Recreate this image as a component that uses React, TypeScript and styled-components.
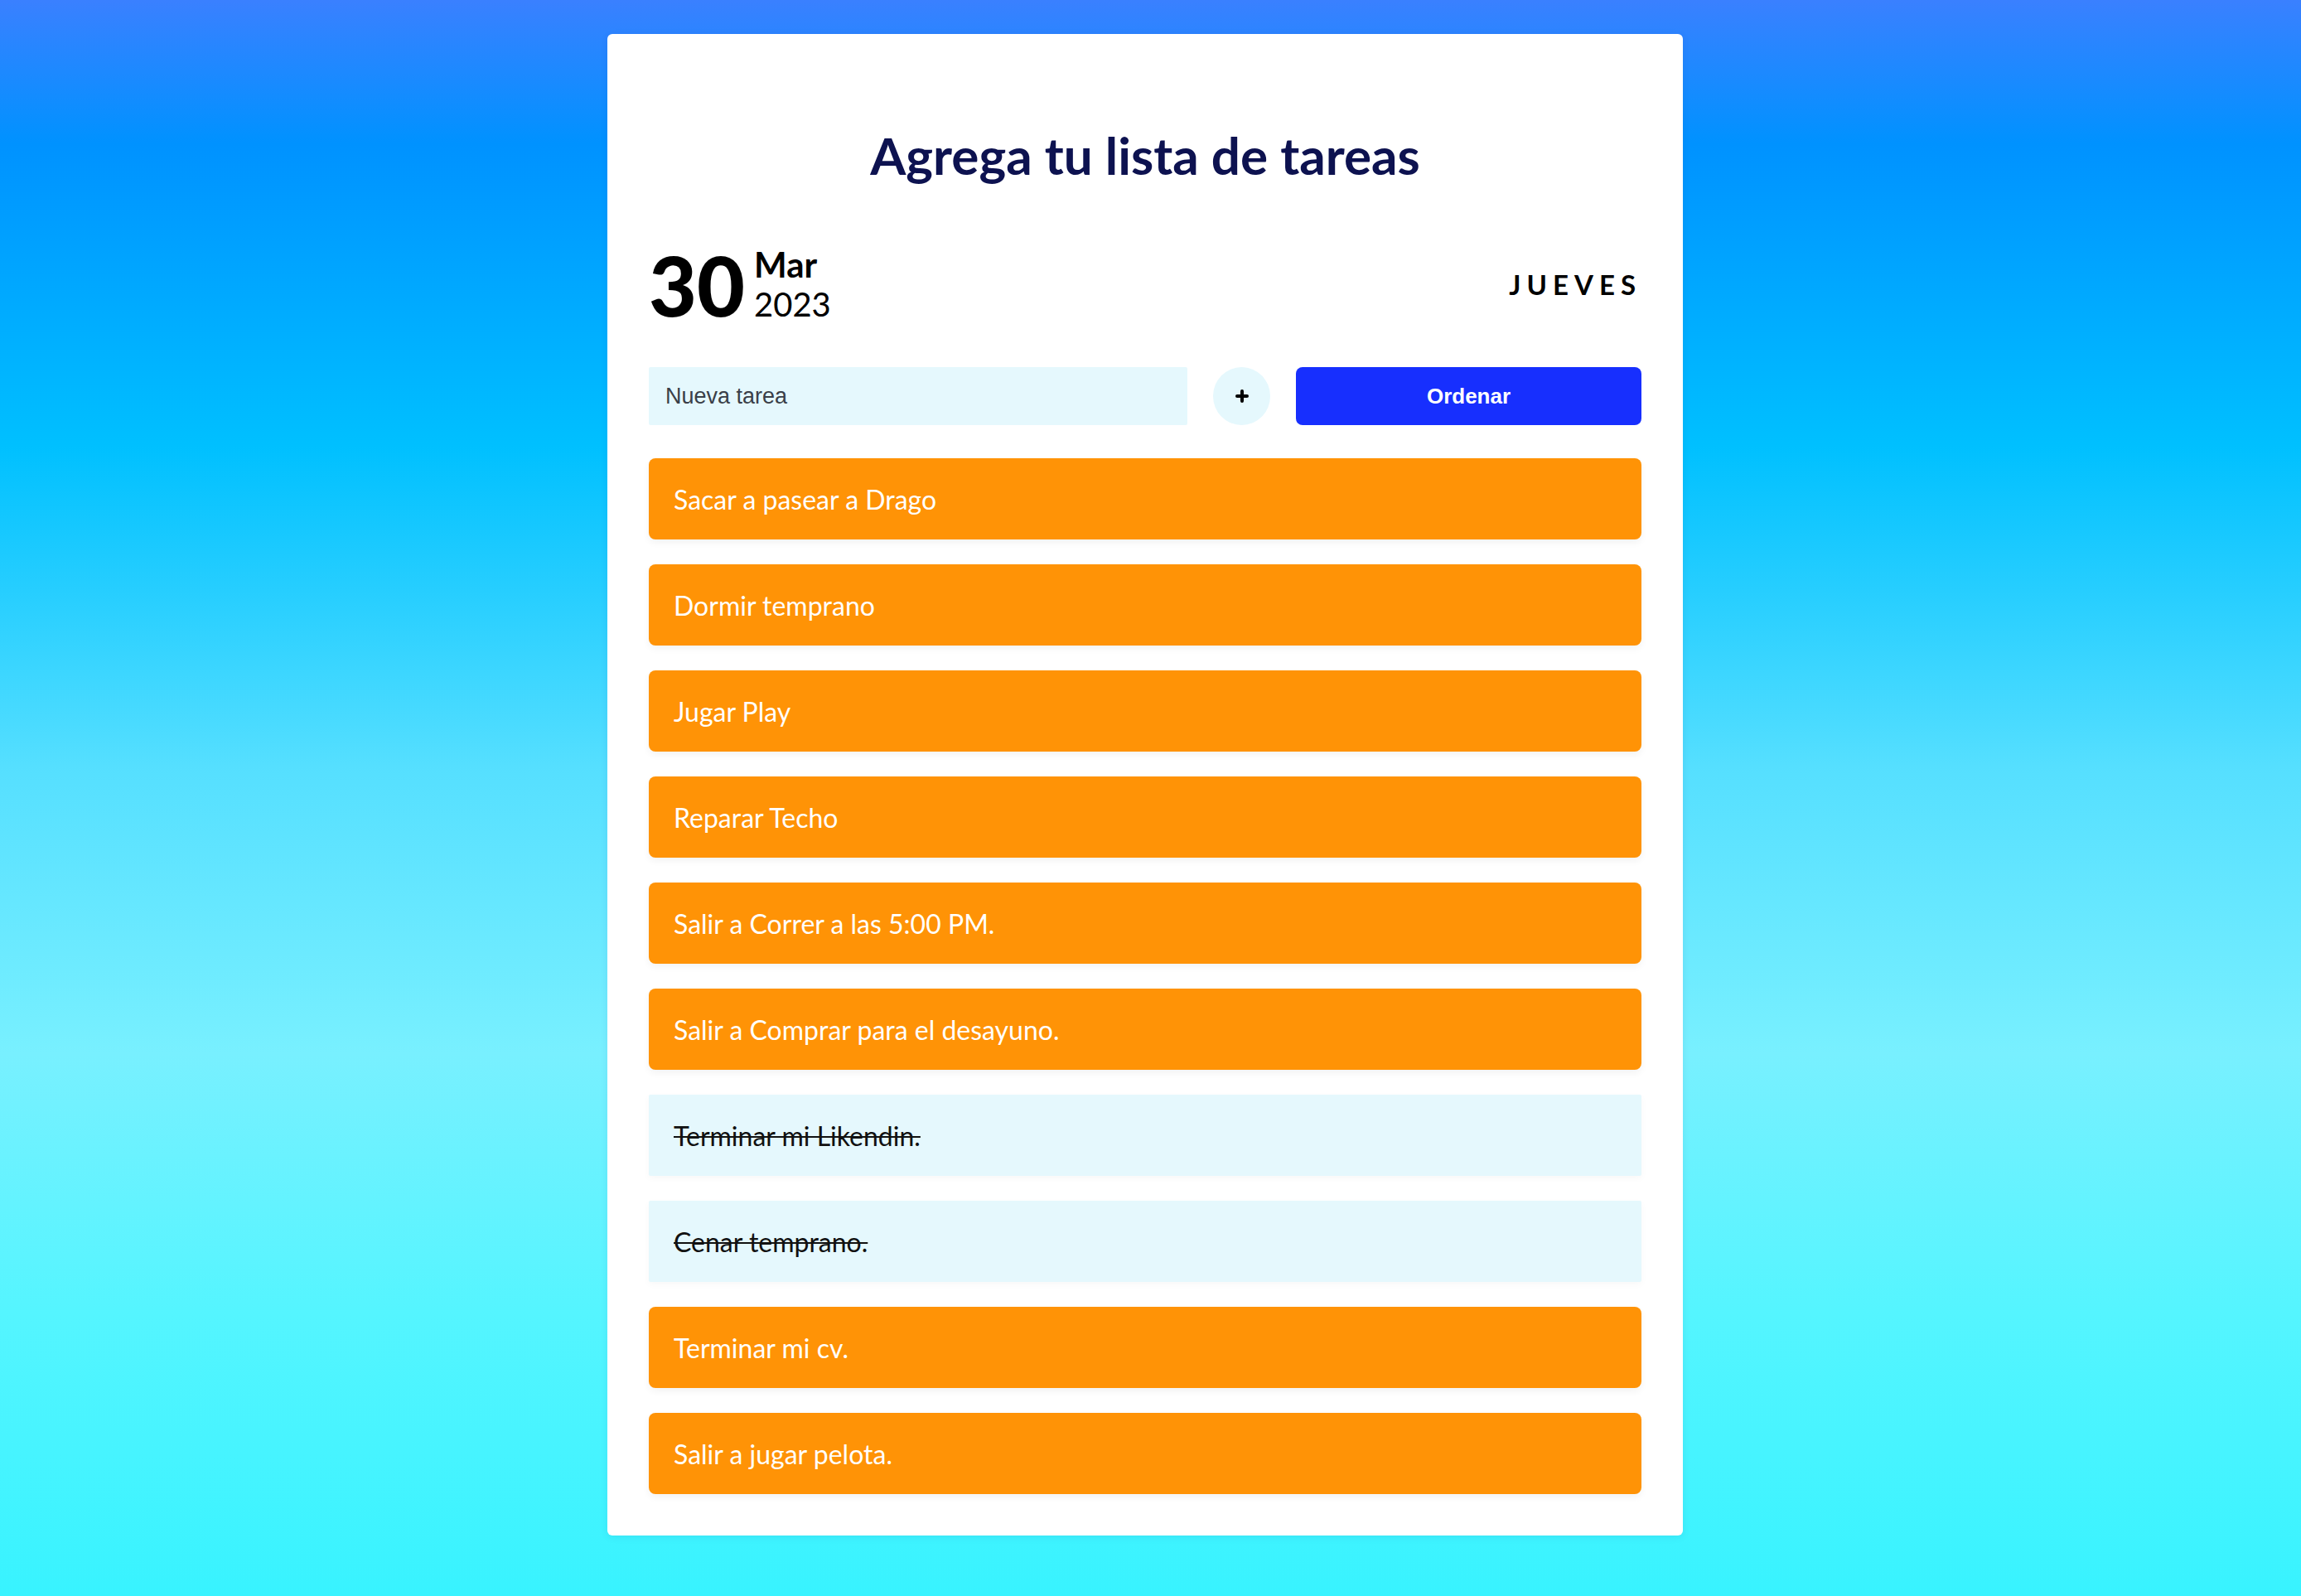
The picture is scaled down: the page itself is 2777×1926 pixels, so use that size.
import React from "react";
import styled, { createGlobalStyle } from "styled-components";

const GlobalStyle = createGlobalStyle`
  html, body {
    margin: 0;
    padding: 0;
  }
  body {
    min-height: 1926px;
    font-family: Lato, "Open Sans", sans-serif;
    background: linear-gradient(
      180deg,
      #3a80ff 0%,
      #0092ff 9%,
      #00c0ff 28%,
      #55dfff 48%,
      #78f0ff 66%,
      #55f5ff 82%,
      #38f3ff 100%
    );
  }
  * { box-sizing: border-box; }
`;

const Page = styled.div`
  display: flex;
  justify-content: center;
  padding: 41px 13px 72px 0;
`;

const Card = styled.main`
  width: 1298px;
  background: #ffffff;
  border-radius: 6px;
  padding: 50px;
  box-shadow: 0 2px 10px rgba(0, 40, 120, 0.08);
`;

const Title = styled.h1`
  margin: 59px 0 0;
  text-align: center;
  font-family: Lato, sans-serif;
  font-weight: 700;
  font-size: 62px;
  line-height: 1.2;
  color: #0d1250;
`;

const DateRow = styled.div`
  margin-top: 69px;
  display: flex;
  align-items: center;
  justify-content: space-between;
`;

const DateBlock = styled.div`
  display: flex;
  align-items: flex-start;
  gap: 11px;
`;

const Day = styled.span`
  font-family: Lato, sans-serif;
  font-weight: 900;
  font-size: 100px;
  line-height: 1;
  color: #000;
`;

const MonthYear = styled.div`
  display: flex;
  flex-direction: column;
  padding-top: 5px;
  gap: 7px;
`;

const Month = styled.span`
  font-weight: 700;
  font-size: 42px;
  line-height: 1;
  color: #000;
`;

const Year = styled.span`
  font-weight: 400;
  font-size: 40px;
  line-height: 1;
  color: #000;
`;

const Weekday = styled.span`
  font-weight: 700;
  font-size: 33px;
  line-height: 1;
  letter-spacing: 7px;
  color: #000;
`;

const InputRow = styled.form`
  margin-top: 50px;
  display: grid;
  grid-template-columns: 1fr 69px 417px;
  column-gap: 31px;
  align-items: stretch;
`;

const TaskInput = styled.input`
  height: 70px;
  border: none;
  outline: none;
  border-radius: 2px;
  background: #e5f8fd;
  padding: 0 20px;
  font-family: "Liberation Sans", Arial, sans-serif;
  font-size: 27px;
  color: #222;
  &::placeholder {
    color: #3a3f48;
  }
`;

const AddButton = styled.button`
  width: 69px;
  height: 70px;
  border: none;
  border-radius: 50%;
  background: #e5f8fd;
  display: flex;
  align-items: center;
  justify-content: center;
  padding: 0;
  cursor: pointer;
`;

const SortButton = styled.button`
  height: 70px;
  border: none;
  border-radius: 8px;
  background: #172ffe;
  color: #fff;
  font-family: "Liberation Sans", Arial, sans-serif;
  font-weight: 700;
  font-size: 26px;
  cursor: pointer;
`;

const List = styled.ul`
  list-style: none;
  margin: 40px 0 0;
  padding: 0;
  display: flex;
  flex-direction: column;
  gap: 30px;
`;

const Item = styled.li<{ $done?: boolean }>`
  height: 98px;
  display: flex;
  align-items: center;
  padding: 0 30px;
  border-radius: ${(p) => (p.$done ? "2px" : "8px")};
  background: ${(p) => (p.$done ? "#e5f8fd" : "#ff9306")};
  color: ${(p) => (p.$done ? "#111" : "#fff")};
  text-decoration: ${(p) => (p.$done ? "line-through" : "none")};
  text-decoration-thickness: 2px;
  font-family: Lato, sans-serif;
  font-size: 32px;
  box-shadow: ${(p) =>
    p.$done ? "0 3px 8px rgba(0,0,0,0.03)" : "0 4px 8px rgba(0,0,0,0.05)"};
`;

const tasks: { text: string; done?: boolean }[] = [
  { text: "Sacar a pasear a Drago" },
  { text: "Dormir temprano" },
  { text: "Jugar Play" },
  { text: "Reparar Techo" },
  { text: "Salir a Correr a las 5:00 PM." },
  { text: "Salir a Comprar para el desayuno." },
  { text: "Terminar mi Likendin.", done: true },
  { text: "Cenar temprano.", done: true },
  { text: "Terminar mi cv." },
  { text: "Salir a jugar pelota." },
];

const PlusIcon = () => (
  <svg width="16" height="16" viewBox="0 0 16 16" aria-hidden="true">
    <path
      d="M8 2v12M2 8h12"
      stroke="#000"
      strokeWidth="4"
      strokeLinecap="round"
    />
  </svg>
);

export default function App() {
  return (
    <>
      <GlobalStyle />
      <Page>
        <Card>
          <Title>Agrega tu lista de tareas</Title>
          <DateRow>
            <DateBlock>
              <Day>30</Day>
              <MonthYear>
                <Month>Mar</Month>
                <Year>2023</Year>
              </MonthYear>
            </DateBlock>
            <Weekday>JUEVES</Weekday>
          </DateRow>
          <InputRow onSubmit={(e) => e.preventDefault()}>
            <TaskInput placeholder="Nueva tarea" />
            <AddButton type="button" aria-label="Agregar">
              <PlusIcon />
            </AddButton>
            <SortButton type="button">Ordenar</SortButton>
          </InputRow>
          <List>
            {tasks.map((t) => (
              <Item key={t.text} $done={t.done}>
                {t.text}
              </Item>
            ))}
          </List>
        </Card>
      </Page>
    </>
  );
}
